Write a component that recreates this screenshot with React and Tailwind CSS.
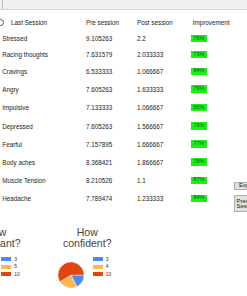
const rows = [
  { name: 'Stressed', pre: '9.105263', post: '2.2', imp: '76%', h: 'h-[16px]' },
  { name: 'Racing thoughts', pre: '7.631579', post: '2.033333', imp: '73%', h: 'h-[16.5px]' },
  { name: 'Cravings', pre: '6.533333', post: '1.066667', imp: '84%', h: 'h-[16.5px]' },
  { name: 'Angry', pre: '7.605263', post: '1.633333', imp: '79%', h: 'h-[19px]' },
  { name: 'Impulsive', pre: '7.133333', post: '1.066667', imp: '85%', h: 'h-[18.5px]' },
  { name: 'Depressed', pre: '7.605263', post: '1.566667', imp: '79%', h: 'h-[18px]' },
  { name: 'Fearful', pre: '7.157895', post: '1.666667', imp: '77%', h: 'h-[18px]' },
  { name: 'Body aches', pre: '8.368421', post: '1.866667', imp: '78%', h: 'h-[18px]' },
  { name: 'Muscle Tension', pre: '8.210526', post: '1.1', imp: '87%', h: 'h-[18.5px]' },
  { name: 'Headache', pre: '7.789474', post: '1.233333', imp: '84%', h: 'h-[17.5px]' },
];

const colors = ['#4a8cf0', '#ffb64c', '#e2450f'];

const Pie = ({ values }) => {
  const total = values.reduce((a, b) => a + b, 0);
  const r = 13;
  let start = 90;
  const pt = (deg) => {
    const a = (deg * Math.PI) / 180;
    return [13 + r * Math.sin(a), 13 - r * Math.cos(a)];
  };
  return (
    <svg width="26" height="26" viewBox="0 0 26 26" className="shrink-0">
      {values.map((v, i) => {
        const sweep = (v / total) * 360;
        const [x1, y1] = pt(start);
        const [x2, y2] = pt(start + sweep);
        const large = sweep > 180 ? 1 : 0;
        start += sweep;
        return (
          <path
            key={i}
            d={`M13 13 L${x1} ${y1} A${r} ${r} 0 ${large} 1 ${x2} ${y2} Z`}
            fill={colors[i]}
            stroke="#fff"
            strokeWidth="0.4"
          />
        );
      })}
    </svg>
  );
};

const Chart = ({ line1, line2, values }) => (
  <div className="w-[91.5px] shrink-0">
    <div className="text-center text-[10.5px] leading-[11px] text-[#444]">
      <div>{line1}</div>
      <div>{line2}</div>
    </div>
    <div className="flex items-start mt-[7px] pl-[16.8px]">
      <div className="mt-[6px]">
        <Pie values={values} />
      </div>
      <div className="ml-[8.5px] flex flex-col">
        {values.map((v, i) => (
          <div key={i} className="flex items-center h-[7.5px]">
            <div className="w-[10px] h-[4px]" style={{ background: colors[i] }} />
            <span className="ml-[3px] text-[5px] leading-[5px] text-[#333]">{v}</span>
          </div>
        ))}
      </div>
    </div>
  </div>
);

export default function App() {
  return (
    <div
      className="w-[247px] h-[296px] bg-white overflow-hidden text-[#222]"
      style={{ fontFamily: '"Liberation Sans", Arial, sans-serif' }}
    >
      <div className="h-[10px] bg-[#f0f0f0] border-b border-[#d6d6d6] pl-[2px]">
        <div className="h-full border-l border-[#bdbdbd]" />
      </div>
      <div className="flex items-start mt-[5px]">
        <div className="w-[234px] shrink-0 text-[6.3px] leading-[7px]">
          <div className="flex items-center h-[15.5px]">
            <div className="w-[86px] flex items-center">
              <div className="ml-[-3.5px] w-[7px] h-[7px] rounded-full border border-[#555] bg-white" />
              <span className="ml-[7.5px]">Last Session</span>
            </div>
            <div className="w-[51px]">Pre session</div>
            <div className="w-[55.7px]">Post session</div>
            <div>Improvement</div>
          </div>
          {rows.map((r) => (
            <div key={r.name} className={`flex items-center ${r.h}`}>
              <div className="w-[86px] pl-[2.3px]">{r.name}</div>
              <div className="w-[51px]">{r.pre}</div>
              <div className="w-[54px]">{r.post}</div>
              <div className="w-[16px] h-[7.4px] bg-[#18f018] flex items-center justify-center text-[5.6px] leading-none text-[#1d5a1d]">
                {r.imp}
              </div>
            </div>
          ))}
        </div>
        <div className="flex flex-col shrink-0 mt-[167px] text-[6px] leading-[5.6px] text-[#222]">
          <div className="w-[30px] h-[8px] bg-[#e1e1e1] border border-[#adadad] pl-[4px] flex items-center">
            Export
          </div>
          <div className="w-[30px] h-[17px] mt-[5px] bg-[#e1e1e1] border border-[#adadad] pl-[1.5px] pt-[2.5px]">
            <div>Previous</div>
            <div>Sessions</div>
          </div>
        </div>
      </div>
      <div className="flex mt-[14.5px] ml-[-50px]">
        <Chart line1="How" line2="important?" values={[3, 5, 10]} />
        <Chart line1="How" line2="confident?" values={[3, 4, 10]} />
      </div>
    </div>
  );
}
